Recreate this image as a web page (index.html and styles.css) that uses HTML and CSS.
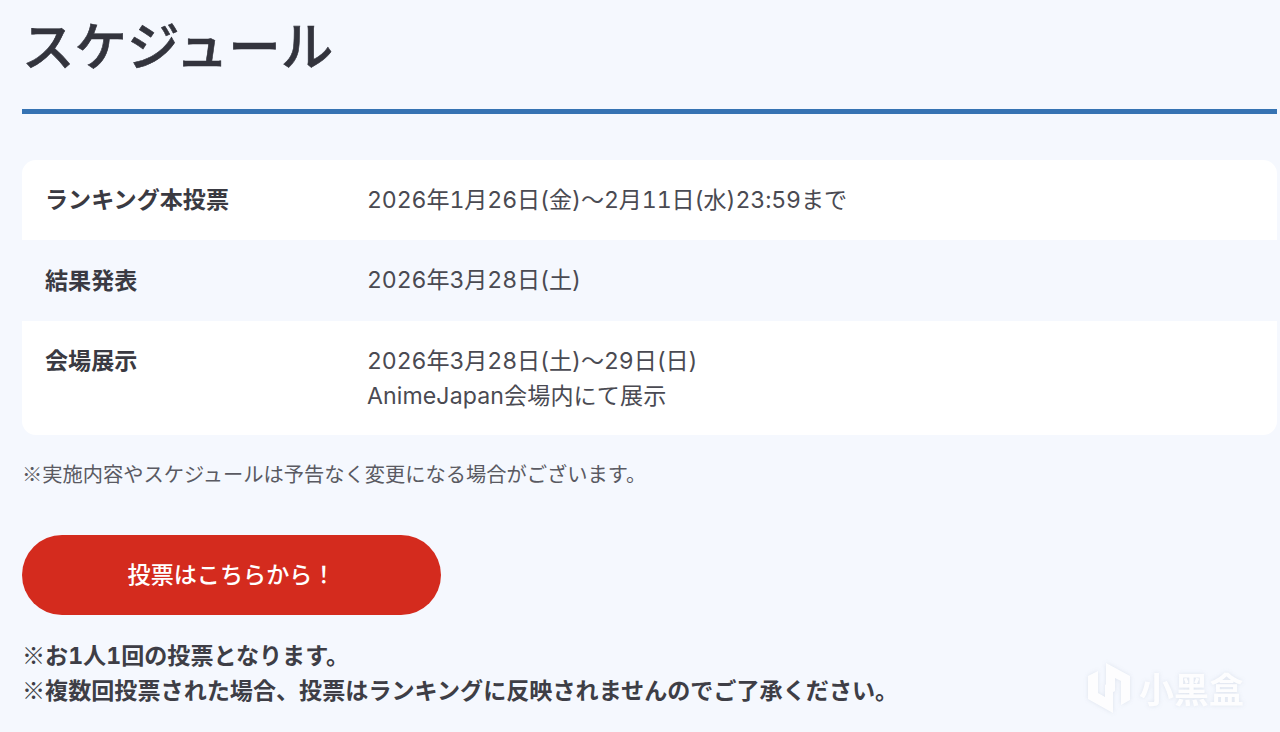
FILE: index.html
```
<!DOCTYPE html>
<html lang="ja">
<head>
<meta charset="utf-8">
<title>スケジュール</title>
<link rel="stylesheet" href="styles.css">
</head>
<body>
<main class="page">
  <h1 class="title">スケジュール</h1>
  <dl class="table">
    <div class="row">
      <dt class="label">ランキング本投票</dt>
      <dd class="value">2026年1月26日(金)～2月11日(水)23:59まで</dd>
    </div>
    <div class="row row-alt">
      <dt class="label">結果発表</dt>
      <dd class="value">2026年3月28日(土)</dd>
    </div>
    <div class="row row-last">
      <dt class="label">会場展示</dt>
      <dd class="value">2026年3月28日(土)～29日(日)<br><span class="venue">AnimeJapan会場内にて展示</span></dd>
    </div>
  </dl>
  <p class="note"><span class="mark">※</span>実施内容やスケジュールは予告なく変更になる場合がございます。</p>
  <a class="button" href="#">投票はこちらから！</a>
  <p class="caution"><span class="mark">※</span>お1人1回の投票となります。<br><span class="mark">※</span>複数回投票された場合、投票はランキングに反映されませんのでご了承ください。</p>
</main>
<div class="watermark">
  <svg class="wm-logo" viewBox="0 0 42 50" width="42" height="50" aria-hidden="true">
    <path d="M18 0 L42 13 V37 L33 42 V18 L27 15 V28 L18 33 Z" fill="#fff"/>
    <path d="M0 13 L10 8 V30 L17 34 V22 L25 17 V50 L0 36 Z" fill="#fff"/>
  </svg>
  <span class="wm-text">小黑盒</span>
</div>
</body>
</html>
```
FILE: styles.css
```
html, body {
  margin: 0;
  height: 100%;
  overflow: hidden;
  background: #f5f8fe;
}
body {
  font-family: "Inter", "Noto Sans CJK JP", "Noto Sans", sans-serif;
  font-variant-numeric: tabular-nums;
  color: #3a3a42;
}
.mark {
  font-family: "Noto Sans CJK JP", sans-serif;
  line-height: 0;
}
.page {
  padding: 0 3px 0 22px;
}
.title {
  margin: 0;
  box-sizing: border-box;
  height: 114px;
  padding-top: 11px;
  font-size: 52.5px;
  line-height: 72px;
  font-weight: 500;
  -webkit-text-stroke: .6px #33343d;
  color: #33343d;
  border-bottom: 5px solid #3673b3;
}
.table {
  margin: 46px 0 0;
  background: #fff;
  border-radius: 14px;
  overflow: hidden;
}
.row {
  display: flex;
  height: 80px;
  padding: 0 24px;
  box-sizing: border-box;
  align-items: center;
}
.row-alt {
  background: #f5f8fe;
  height: 81px;
}
.row-last {
  height: 114px;
  align-items: flex-start;
  padding-top: 23px;
}
.label {
  width: 322px;
  flex: none;
  font-size: 23.1px;
  line-height: 34px;
  font-weight: 700;
  margin-left: -1px;
}
.value {
  margin: 0;
  font-size: 23.1px;
  line-height: 35px;
  font-weight: 400;
  letter-spacing: -.1px;
  color: #4a4a52;
}
.venue {
  letter-spacing: .1px;
}
.note {
  margin: 23px 0 0;
  font-size: 20.25px;
  line-height: 34px;
  color: #5a5a62;
}
.button {
  display: flex;
  box-sizing: border-box;
  width: 419px;
  height: 80px;
  margin-top: 43px;
  padding-bottom: 4px;
  align-items: center;
  justify-content: center;
  border-radius: 40px;
  background: #d42b1e;
  color: #fff;
  font-size: 23.1px;
  font-weight: 500;
  text-decoration: none;
}
.caution {
  margin: 24px 0 0;
  font-size: 23.1px;
  line-height: 35px;
  font-weight: 700;
  color: #3e3e46;
}
.watermark {
  position: absolute;
  left: 1088px;
  top: 663px;
  display: flex;
  align-items: center;
  gap: 9px;
  opacity: .85;
  filter: drop-shadow(0 0 2px rgba(190, 200, 215, .5));
}
.wm-text {
  font-size: 35px;
  line-height: 50px;
  font-weight: 700;
  color: #fff;
  font-family: "Noto Sans CJK SC", sans-serif;
}
```
